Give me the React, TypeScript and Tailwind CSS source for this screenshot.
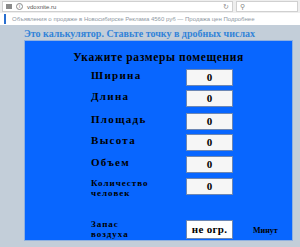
const rows = [
  { label: 'Ширина', top: 'mt-[5px]' },
  { label: 'Длина', top: 'mt-[4px]' },
  { label: 'Площадь', top: 'mt-[6px]' },
  { label: 'Высота', top: 'mt-[4px]' },
  { label: 'Объем', top: 'mt-[5px]' },
];

const App = () => {
  return (
    <div className="w-[300px] h-[247px] overflow-hidden bg-[#c3ced9] font-['Liberation_Serif',serif] flex flex-col">
      {/* browser toolbar */}
      <div className="h-[13px] bg-[#eeeeee] flex items-center gap-[3px] px-[2px] shrink-0 font-['Liberation_Sans',sans-serif]">
        <div className="flex-1 h-[11px] bg-white border border-[#d0d0d0] flex items-center gap-[4px] px-[3px]">
          <div className="w-[6px] h-[5px] bg-[#8a8a8a]" />
          <div className="w-[7px] h-[7px] rounded-full border border-[#8a8a8a] text-[5px] leading-[5px] text-center text-[#777]">i</div>
          <span className="text-[6px] text-[#555] leading-none">vdoxnite.ru</span>
          <span className="ml-auto text-[7px] text-[#888] leading-none">↻</span>
        </div>
        <div className="w-[62px] h-[11px] bg-white border border-[#d0d0d0] flex items-center px-[3px]">
          <span className="text-[7px] text-[#888] leading-none">⚲</span>
        </div>
      </div>

      {/* page top strip */}
      <div className="h-[12px] bg-white flex items-center shrink-0 overflow-hidden font-['Liberation_Sans',sans-serif]">
        <div className="w-[2px] h-[10px] bg-[#2a6fd0] ml-[4px] mr-[6px]" />
        <span className="text-[6px] text-[#8f98a3] whitespace-nowrap leading-none">
          Объявления о продаже в Новосибирске Реклама 4560 руб — Продажа цен Подробнее
        </span>
      </div>

      <div className="pl-[24px] pr-[7px] flex flex-col">
        <div className="h-[15px] flex items-end pb-[1px]">
          <span className="text-[10px] font-bold text-[#3283d8] leading-none whitespace-nowrap">
            Это калькулятор. Ставьте точку в дробных числах
          </span>
        </div>

        <div className="h-[201px] bg-[#0866ff] border border-[#8fb0e0] flex flex-col">
          <div className="pt-[11px] text-center text-[11.5px] font-bold text-black leading-none tracking-[0.6px]">
            Укажите размеры помещения
          </div>

          <div className="pl-[66px] flex flex-col">
            {rows.map((r) => (
              <div key={r.label} className={`${r.top} flex items-center h-[17px]`}>
                <div className="w-[95px] text-[11px] font-bold text-black leading-none tracking-[1.3px] -mt-[3px]">
                  {r.label}
                </div>
                <div className="w-[47px] h-[17px] bg-[#f6f6f6] border border-[#6d87b3] flex items-center justify-center text-[11px] font-bold text-black">
                  0
                </div>
              </div>
            ))}

            <div className="mt-[5px] flex items-start h-[17px]">
              <div className="w-[95px] text-[9px] font-bold text-black leading-[10px] tracking-[1px]">
                Количество
                <br />
                человек
              </div>
              <div className="w-[47px] h-[17px] bg-[#f6f6f6] border border-[#6d87b3] flex items-center justify-center text-[11px] font-bold text-black">
                0
              </div>
            </div>

            <div className="mt-[25px] flex items-center h-[19px]">
              <div className="w-[95px] text-[9px] font-bold text-black leading-[10px] tracking-[1px]">
                Запас
                <br />
                воздуха
              </div>
              <div className="w-[47px] h-[19px] bg-white border border-[#6d87b3] flex items-center justify-center text-[11px] font-bold text-black tracking-[0.3px]">
                не огр.
              </div>
              <div className="ml-[20px] text-[8px] font-bold text-black mt-[3px]">Минут</div>
            </div>
          </div>
        </div>

        <div className="pt-[2px] text-[22px] font-bold text-black leading-none whitespace-nowrap">
          Расчет вентиляции помещений
        </div>
      </div>
    </div>
  );
};

export default App;
